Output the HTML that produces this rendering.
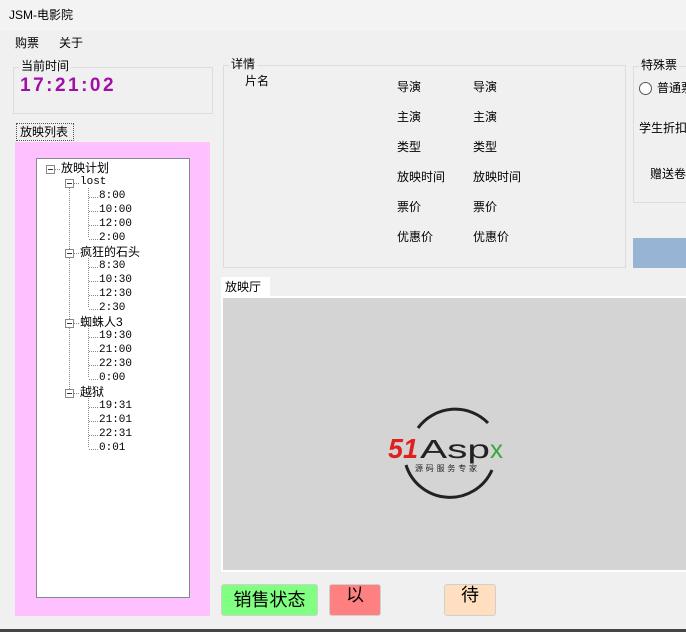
<!DOCTYPE html>
<html><head><meta charset="utf-8"><style>
*{margin:0;padding:0;box-sizing:border-box}
body{width:686px;height:632px;background:#f0f0f0;position:relative;overflow:hidden;font-family:"Liberation Sans","Noto Sans CJK SC",sans-serif;font-size:12px;color:#000}
.a{position:absolute;white-space:nowrap;line-height:14px}
.g{position:absolute;border:1px solid #dcdcdc}
.m{font-family:"Liberation Mono","Noto Sans CJK SC",monospace;font-size:11px}
.bt{position:absolute;border:1px solid #d0d0d0;border-radius:3px;text-align:center}
</style></head><body>
<div style="position:absolute;left:0;top:0;width:686px;height:31px;background:#f3f3f3"></div>
<div class="a" style="left:9px;top:8px">JSM-电影院</div>
<div class="a" style="left:15px;top:36px">购票</div>
<div class="a" style="left:59px;top:36px">关于</div>

<div class="g" style="left:13px;top:67px;width:200px;height:47px"></div>
<div class="a" style="left:19px;top:59px;background:#f0f0f0;padding:0 2px">当前时间</div>
<div class="a" style="left:20px;top:75px;font-size:19px;line-height:22px;font-weight:bold;color:#a010a8;letter-spacing:2.5px">17:21:02</div>

<div class="a" style="left:16px;top:123px;width:58px;height:18px;border:1px dotted #555;padding:1px 3px;line-height:15px">放映列表</div>
<div style="position:absolute;left:15px;top:142px;width:195px;height:474px;background:#ffc0ff"></div>
<div style="position:absolute;left:36px;top:158px;width:154px;height:440px;background:#fff;border:1px solid #828790"></div>
<svg style="position:absolute;left:36px;top:158px" width="154" height="440">
<g fill="none" stroke="#888" stroke-dasharray="1 1">
<line x1="33.5" y1="30" x2="33.5" y2="234"/>
<line x1="52.5" y1="30" x2="52.5" y2="80"/>
<line x1="52.5" y1="100" x2="52.5" y2="150"/>
<line x1="52.5" y1="170" x2="52.5" y2="220"/>
<line x1="52.5" y1="240" x2="52.5" y2="290"/>
<line x1="19" y1="11.5" x2="24" y2="11.5"/>
</g>
<g fill="#fff" stroke="#888">
<rect x="10.5" y="7.5" width="8" height="8"/><rect x="29.5" y="21.5" width="8" height="8"/>
<rect x="29.5" y="91.5" width="8" height="8"/><rect x="29.5" y="161.5" width="8" height="8"/><rect x="29.5" y="231.5" width="8" height="8"/>
</g>
<g stroke="#333"><line x1="12" y1="11.5" x2="17" y2="11.5"/><line x1="31" y1="25.5" x2="36" y2="25.5"/><line x1="31" y1="95.5" x2="36" y2="95.5"/><line x1="31" y1="165.5" x2="36" y2="165.5"/><line x1="31" y1="235.5" x2="36" y2="235.5"/></g>
<g stroke="#888" stroke-dasharray="1 1">
<line x1="38" y1="25.5" x2="43" y2="25.5"/><line x1="38" y1="95.5" x2="43" y2="95.5"/><line x1="38" y1="165.5" x2="43" y2="165.5"/><line x1="38" y1="235.5" x2="43" y2="235.5"/>
<line x1="53" y1="39.5" x2="62" y2="39.5"/><line x1="53" y1="53.5" x2="62" y2="53.5"/><line x1="53" y1="67.5" x2="62" y2="67.5"/><line x1="53" y1="81.5" x2="62" y2="81.5"/>
<line x1="53" y1="109.5" x2="62" y2="109.5"/><line x1="53" y1="123.5" x2="62" y2="123.5"/><line x1="53" y1="137.5" x2="62" y2="137.5"/><line x1="53" y1="151.5" x2="62" y2="151.5"/>
<line x1="53" y1="179.5" x2="62" y2="179.5"/><line x1="53" y1="193.5" x2="62" y2="193.5"/><line x1="53" y1="207.5" x2="62" y2="207.5"/><line x1="53" y1="221.5" x2="62" y2="221.5"/>
<line x1="53" y1="249.5" x2="62" y2="249.5"/><line x1="53" y1="263.5" x2="62" y2="263.5"/><line x1="53" y1="277.5" x2="62" y2="277.5"/><line x1="53" y1="291.5" x2="62" y2="291.5"/>
</g>
</svg>
<div class="a" style="left:61px;top:161px">放映计划</div>
<div class="a m" style="left:80px;top:175px">lost</div>
<div class="a m" style="left:99px;top:189px">8:00</div>
<div class="a m" style="left:99px;top:203px">10:00</div>
<div class="a m" style="left:99px;top:217px">12:00</div>
<div class="a m" style="left:99px;top:231px">2:00</div>
<div class="a" style="left:80px;top:245px">疯狂的石头</div>
<div class="a m" style="left:99px;top:259px">8:30</div>
<div class="a m" style="left:99px;top:273px">10:30</div>
<div class="a m" style="left:99px;top:287px">12:30</div>
<div class="a m" style="left:99px;top:301px">2:30</div>
<div class="a" style="left:80px;top:315px">蜘蛛人3</div>
<div class="a m" style="left:99px;top:329px">19:30</div>
<div class="a m" style="left:99px;top:343px">21:00</div>
<div class="a m" style="left:99px;top:357px">22:30</div>
<div class="a m" style="left:99px;top:371px">0:00</div>
<div class="a" style="left:80px;top:385px">越狱</div>
<div class="a m" style="left:99px;top:399px">19:31</div>
<div class="a m" style="left:99px;top:413px">21:01</div>
<div class="a m" style="left:99px;top:427px">22:31</div>
<div class="a m" style="left:99px;top:441px">0:01</div>

<div class="g" style="left:223px;top:65px;width:403px;height:203px"></div>
<div class="a" style="left:229px;top:57px;background:#f0f0f0;padding:0 2px">详情</div>
<div class="a" style="left:245px;top:74px">片名</div>
<div class="a" style="left:397px;top:80px">导演</div><div class="a" style="left:473px;top:80px">导演</div>
<div class="a" style="left:397px;top:110px">主演</div><div class="a" style="left:473px;top:110px">主演</div>
<div class="a" style="left:397px;top:140px">类型</div><div class="a" style="left:473px;top:140px">类型</div>
<div class="a" style="left:397px;top:170px">放映时间</div><div class="a" style="left:473px;top:170px">放映时间</div>
<div class="a" style="left:397px;top:200px">票价</div><div class="a" style="left:473px;top:200px">票价</div>
<div class="a" style="left:397px;top:230px">优惠价</div><div class="a" style="left:473px;top:230px">优惠价</div>

<div class="g" style="left:633px;top:66px;width:60px;height:137px"></div>
<div class="a" style="left:639px;top:58px;background:#f0f0f0;padding:0 2px">特殊票</div>
<div style="position:absolute;left:639px;top:82px;width:13px;height:13px;border:1px solid #555;border-radius:50%;background:#fff"></div>
<div class="a" style="left:657px;top:81px">普通票</div>
<div class="a" style="left:639px;top:121px">学生折扣</div>
<div class="a" style="left:650px;top:167px">赠送卷</div>
<div style="position:absolute;left:633px;top:238px;width:53px;height:30px;background:#98b4d4"></div>

<div class="a" style="left:221px;top:277px;width:49px;height:20px;background:#fff;padding:3px 4px">放映厅</div>
<div style="position:absolute;left:221px;top:296px;width:470px;height:276px;background:#fff"></div>
<div style="position:absolute;left:223px;top:298px;width:470px;height:272px;background:#d4d4d4"></div>
<svg style="position:absolute;left:380px;top:395px" width="140" height="110">
<path d="M38 33 A46 46 0 0 1 108 28" fill="none" stroke="#222" stroke-width="3"/>
<path d="M26 70 A46 46 0 0 0 112 75" fill="none" stroke="#222" stroke-width="3"/>
<text x="8" y="63" font-family="Liberation Sans" font-size="28" font-weight="bold" font-style="italic" fill="#e02020" textLength="30" lengthAdjust="spacingAndGlyphs">51</text>
<text x="40" y="63" font-family="Liberation Sans" font-size="26" fill="#222" textLength="70" lengthAdjust="spacingAndGlyphs">Asp</text>
<text x="110" y="63" font-family="Liberation Sans" font-size="26" fill="#3aa83a">x</text>
<text x="35" y="76" font-family="Noto Sans CJK SC" font-size="8" fill="#222" textLength="62">源码服务专家</text>
</svg>

<div class="bt" style="left:221px;top:584px;width:97px;height:32px;background:#80ff80;font-size:18px;line-height:30px">销售状态</div>
<div class="bt" style="left:329px;top:584px;width:52px;height:32px;background:#ff8080;font-size:18px;line-height:20px">以</div>
<div class="bt" style="left:444px;top:584px;width:52px;height:32px;background:#ffdfc0;font-size:18px;line-height:20px">待</div>
<div style="position:absolute;left:0;top:629px;width:686px;height:3px;background:#444"></div>
</body></html>
